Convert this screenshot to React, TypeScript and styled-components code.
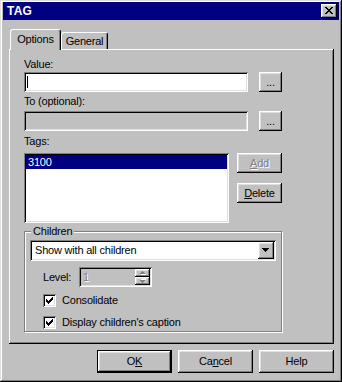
import React from 'react';
import styled, { createGlobalStyle, css } from 'styled-components';

const GlobalStyle = createGlobalStyle`
  html, body {
    margin: 0;
    padding: 0;
    background: #c0c0c0;
  }
  body {
    font-family: 'Liberation Sans', Arial, sans-serif;
    font-size: 11px;
  }
  * {
    box-sizing: border-box;
  }
`;

// win95 bevels
const raised = css`
  box-shadow: inset -1px -1px #000, inset 1px 1px #fff, inset -2px -2px #808080, inset 2px 2px #dfdfdf;
`;

const sunken = css`
  box-shadow: inset 1px 1px #808080, inset -1px -1px #fff, inset 2px 2px #000, inset -2px -2px #dfdfdf;
`;

const disabledText = css`
  color: #808080;
  text-shadow: 1px 1px 0 #fff;
`;

const CloseGlyph = () => (
  <svg width="8" height="7" viewBox="0 0 8 7" shapeRendering="crispEdges">
    <path
      fill="#000"
      d="M0 0h2v1h-2z M6 0h2v1h-2z M1 1h2v1h-2z M5 1h2v1h-2z M2 2h4v1h-4z M3 3h2v1h-2z M2 4h4v1h-4z M1 5h2v1h-2z M5 5h2v1h-2z M0 6h2v1h-2z M6 6h2v1h-2z"
    />
  </svg>
);

const CheckGlyph = () => (
  <svg width="7" height="7" viewBox="0 0 7 7" shapeRendering="crispEdges">
    <path
      fill="#000"
      d="M6 0h1v1h-1z M5 1h2v1h-2z M0 2h1v1h-1z M4 2h3v1h-3z M0 3h2v1h-2z M3 3h3v1h-3z M0 4h5v1h-5z M1 5h3v1h-3z M2 6h1v1h-1z"
    />
  </svg>
);

const DownArrow = () => (
  <svg width="7" height="4" viewBox="0 0 7 4" shapeRendering="crispEdges">
    <path fill="#000" d="M0 0h7v1h-7z M1 1h5v1h-5z M2 2h3v1h-3z M3 3h1v1h-1z" />
  </svg>
);

const SpinArrow: React.FC<{ up?: boolean }> = ({ up }) => (
  <svg width="6" height="4" viewBox="0 0 6 4" shapeRendering="crispEdges">
    <g transform={up ? undefined : 'translate(0 4) scale(1 -1)'}>
      <path fill="#fff" d="M3 1h1v1h-1z M2 2h3v1h-3z M1 3h5v1h-5z" />
      <path fill="#808080" d="M2 0h1v1h-1z M1 1h3v1h-3z M0 2h5v1h-5z" />
    </g>
  </svg>
);

export default function App() {
  return (
    <>
      <GlobalStyle />
      <Window>
        <TitleBar>
          <TitleText>TAG</TitleText>
          <CloseButton>
            <CloseGlyph />
          </CloseButton>
        </TitleBar>

        <Body>
          <TabStrip>
            <Tab $active $w={51}>Options</Tab>
            <Tab $w={47}>General</Tab>
          </TabStrip>

          <Panel>
            <FieldLabel $mb={1}>Value:</FieldLabel>
            <FieldRow>
              <TextField>
                <Caret />
              </TextField>
              <PushButton $w={23} $h={20}>...</PushButton>
            </FieldRow>

            <FieldLabel $mt={3} $mb={3}>To (optional):</FieldLabel>
            <FieldRow>
              <TextField $disabled />
              <PushButton $w={23} $h={20}>...</PushButton>
            </FieldRow>

            <FieldLabel $mt={4} $mb={5}>Tags:</FieldLabel>
            <TagsRow>
              <ListBox>
                <ListItem $selected>3100</ListItem>
              </ListBox>
              <ButtonColumn>
                <PushButton $w={45} $h={20} $disabled>
                  <u>A</u>dd
                </PushButton>
                <PushButton $w={45} $h={20}>
                  <u>D</u>elete
                </PushButton>
              </ButtonColumn>
            </TagsRow>

            <GroupBox>
              <GroupTitle>Children</GroupTitle>
              <ComboBox>
                <ComboText>Show with all children</ComboText>
                <ComboArrow>
                  <DownArrow />
                </ComboArrow>
              </ComboBox>

              <LevelRow>
                <LevelLabel>Level:</LevelLabel>
                <SpinBox>
                  <SpinValue>1</SpinValue>
                  <SpinButtons>
                    <SpinButton>
                      <SpinArrow up />
                    </SpinButton>
                    <SpinButton>
                      <SpinArrow />
                    </SpinButton>
                  </SpinButtons>
                </SpinBox>
              </LevelRow>

              <CheckRow $mt={7}>
                <CheckBox>
                  <CheckGlyph />
                </CheckBox>
                <CheckText>Consolidate</CheckText>
              </CheckRow>
              <CheckRow $mt={9}>
                <CheckBox>
                  <CheckGlyph />
                </CheckBox>
                <CheckText>Display children's caption</CheckText>
              </CheckRow>
            </GroupBox>
          </Panel>

          <Footer>
            <PushButton $w={75} $h={23} $default>
              O<u>K</u>
            </PushButton>
            <PushButton $w={75} $h={23}>
              Ca<u>n</u>cel
            </PushButton>
            <PushButton $w={75} $h={23}>
              Help
            </PushButton>
          </Footer>
        </Body>
      </Window>
    </>
  );
}

const Window = styled.div`
  width: 342px;
  height: 382px;
  padding: 2px 3px 3px 3px;
  background: #c0c0c0;
  box-shadow: inset -1px -1px #000, inset 1px 1px #dfdfdf, inset -2px -2px #808080, inset 2px 2px #fff;
  display: flex;
  flex-direction: column;
  color: #000;
  letter-spacing: -0.2px;
`;

const TitleBar = styled.div`
  height: 18px;
  padding: 0 2px 0 4px;
  background: #000080;
  display: flex;
  align-items: center;
  justify-content: space-between;
`;

const TitleText = styled.span`
  color: #fff;
  font-weight: bold;
  font-size: 12px;
  letter-spacing: 0.2px;
`;

const CloseButton = styled.div`
  width: 16px;
  height: 14px;
  background: #c0c0c0;
  ${raised};
  display: flex;
  align-items: center;
  justify-content: center;
  padding: 0 1px 1px 0;
`;

const Body = styled.div`
  padding: 0 5px 0 6px;
  display: flex;
  flex-direction: column;
`;

const TabStrip = styled.div`
  height: 20px;
  margin-top: 9px;
  padding-left: 1px;
  display: flex;
  align-items: flex-end;
`;

const Tab = styled.div<{ $active?: boolean; $w: number }>`
  position: relative;
  z-index: ${p => (p.$active ? 1 : 0)};
  width: ${p => p.$w}px;
  height: ${p => (p.$active ? 21 : 17)}px;
  margin-bottom: ${p => (p.$active ? -1 : 0)}px;
  padding-bottom: ${p => (p.$active ? 3 : 1)}px;
  background: #c0c0c0;
  border-top: 1px solid #fff;
  border-left: 1px solid #fff;
  border-right: 1px solid #000;
  border-radius: 3px 3px 0 0;
  box-shadow: inset -1px 0 #808080;
  display: flex;
  align-items: center;
  justify-content: center;
`;

const Panel = styled.div`
  height: 295px;
  padding: 9px 0 0 15px;
  background: #c0c0c0;
  box-shadow: inset -1px -1px #000, inset 1px 1px #fff, inset -2px -2px #808080;
  display: flex;
  flex-direction: column;
  align-items: flex-start;
`;

const FieldLabel = styled.div<{ $mt?: number; $mb?: number }>`
  height: 13px;
  line-height: 13px;
  margin-top: ${p => p.$mt ?? 0}px;
  margin-bottom: ${p => p.$mb ?? 0}px;
`;

const FieldRow = styled.div`
  display: flex;
  gap: 11px;
`;

const TextField = styled.div<{ $disabled?: boolean }>`
  width: 224px;
  height: 20px;
  padding: 4px 3px;
  background: ${p => (p.$disabled ? '#c0c0c0' : '#fff')};
  ${sunken};
`;

const Caret = styled.div`
  width: 1px;
  height: 12px;
  background: #000;
`;

const PushButton = styled.div<{ $w: number; $h: number; $default?: boolean; $disabled?: boolean }>`
  width: ${p => p.$w}px;
  height: ${p => p.$h}px;
  background: #c0c0c0;
  display: flex;
  align-items: center;
  justify-content: center;
  line-height: 13px;
  ${raised};
  ${p => p.$disabled && disabledText};
  ${p =>
    p.$default &&
    css`
      border: 1px solid #000;
      padding-bottom: 1px;
    `};

  u {
    text-decoration-thickness: 1px;
    text-underline-offset: 1px;
  }
`;

const TagsRow = styled.div`
  display: flex;
  gap: 8px;
`;

const ListBox = styled.div`
  width: 205px;
  height: 70px;
  padding: 2px;
  background: #fff;
  ${sunken};
`;

const ListItem = styled.div<{ $selected?: boolean }>`
  height: 14px;
  line-height: 14px;
  padding-left: 2px;
  background: ${p => (p.$selected ? '#000080' : 'transparent')};
  color: ${p => (p.$selected ? '#fff' : '#000')};
`;

const ButtonColumn = styled.div`
  display: flex;
  flex-direction: column;
  gap: 10px;
`;

const GroupBox = styled.div`
  position: relative;
  width: 258px;
  margin-top: 8px;
  padding: 8px 5px 2px 5px;
  border: 1px solid #808080;
  box-shadow: inset 1px 1px #fff, 1px 1px #fff;
  display: flex;
  flex-direction: column;
`;

const GroupTitle = styled.span`
  position: absolute;
  top: -7px;
  left: 6px;
  padding: 0 2px;
  line-height: 13px;
  background: #c0c0c0;
`;

const ComboBox = styled.div`
  height: 21px;
  padding: 2px 2px 2px 5px;
  background: #fff;
  ${sunken};
  display: flex;
  align-items: center;
  justify-content: space-between;
`;

const ComboText = styled.span`
  line-height: 13px;
`;

const ComboArrow = styled.div`
  width: 16px;
  height: 17px;
  background: #c0c0c0;
  ${raised};
  display: flex;
  align-items: center;
  justify-content: center;
  padding: 0 1px 1px 0;
`;

const LevelRow = styled.div`
  margin: 6px 0 0 13px;
  display: flex;
  align-items: center;
`;

const LevelLabel = styled.span`
  width: 36px;
  line-height: 13px;
`;

const SpinBox = styled.div`
  width: 73px;
  height: 20px;
  padding: 2px 2px 2px 4px;
  background: #c0c0c0;
  ${sunken};
  display: flex;
  align-items: center;
  justify-content: space-between;
`;

const SpinValue = styled.span`
  line-height: 13px;
  ${disabledText};
`;

const SpinButtons = styled.div`
  display: flex;
  flex-direction: column;
`;

const SpinButton = styled.div`
  width: 15px;
  height: 8px;
  background: #c0c0c0;
  ${raised};
  display: flex;
  align-items: center;
  justify-content: center;
`;

const CheckRow = styled.div<{ $mt: number }>`
  height: 13px;
  margin: ${p => p.$mt}px 0 0 13px;
  display: flex;
  align-items: center;
`;

const CheckBox = styled.div`
  width: 13px;
  height: 13px;
  padding: 3px;
  background: #fff;
  ${sunken};
  display: flex;
`;

const CheckText = styled.span`
  margin-left: 6px;
  line-height: 13px;
`;

const Footer = styled.div`
  margin-top: 6px;
  display: flex;
  justify-content: flex-end;
  gap: 6px;
`;
